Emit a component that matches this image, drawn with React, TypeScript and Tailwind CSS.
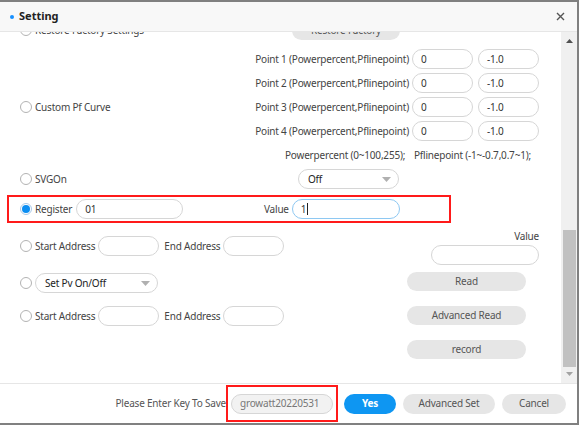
import React from "react";

function Radio({ checked }: { checked?: boolean }) {
  return (
    <span
      className={
        "flex h-[12px] w-[12px] shrink-0 items-center justify-center rounded-full border bg-white " +
        (checked ? "border-[#a9c9e8]" : "border-[#b3b3b3]")
      }
    >
      {checked && <span className="h-[8px] w-[8px] rounded-full bg-[#0b8ef2]" />}
    </span>
  );
}

function Field({
  w,
  value,
  focused,
}: {
  w: string;
  value?: string;
  focused?: boolean;
}) {
  return (
    <div
      className={
        "flex h-[20px] shrink-0 items-center rounded-full border bg-white pl-[8px] text-[#333] " +
        w +
        (focused ? " border-[#8ec8f2]" : " border-[#d6d6d6]")
      }
    >
      {value}
      {focused && <span className="ml-[1px] h-[12px] w-px bg-[#222]" />}
    </div>
  );
}

function Caret() {
  return (
    <svg width="9" height="5" viewBox="0 0 9 5" className="shrink-0">
      <path d="M0 0 L9 0 L4.5 5 Z" fill="#b0b0b0" />
    </svg>
  );
}

function Select({ w, value }: { w: string; value: string }) {
  return (
    <div
      className={
        "flex h-[20px] shrink-0 items-center justify-between rounded-full border border-[#d6d6d6] bg-white pl-[9px] pr-[7px] text-[#222] " +
        w
      }
    >
      <span>{value}</span>
      <Caret />
    </div>
  );
}

function GrayButton({ label, w, h = "h-[19px]" }: { label: string; w: string; h?: string }) {
  return (
    <div
      className={
        "flex shrink-0 items-center justify-center rounded-full bg-[#e6e6e6] text-[#555] " +
        w +
        " " +
        h
      }
    >
      {label}
    </div>
  );
}

const POINTS = ["Point 1", "Point 2", "Point 3", "Point 4"];

function AddressRow() {
  return (
    <div className="flex h-[24px] items-center">
      <Radio />
      <span className="ml-[3px]">Start Address</span>
      <div className="ml-[3px]">
        <Field w="w-[61px]" />
      </div>
      <span className="ml-[5px]">End Address</span>
      <div className="ml-[3px]">
        <Field w="w-[61px]" />
      </div>
    </div>
  );
}

export default function App() {
  return (
    <div
      className="flex h-[425px] w-[579px] flex-col overflow-hidden border-y-2 border-r-2 border-[#808080] bg-white text-[10px] tracking-[-0.2px] text-[#444]"
      style={{ fontFamily: '"Noto Sans", "Open Sans", sans-serif' }}
    >
      {/* title bar */}
      <div className="flex h-[30px] shrink-0 items-center border-b border-[#e6e6e6] bg-[#f8f8f8] pl-[10px] pr-[12px]">
        <span className="h-[4px] w-[4px] rounded-full bg-[#1890ff]" />
        <span className="ml-[5px] text-[11px] font-bold tracking-normal text-[#222]">Setting</span>
        <svg width="9" height="9" viewBox="0 0 9 9" className="ml-auto">
          <path d="M1 1 L8 8 M8 1 L1 8" stroke="#555" strokeWidth="1.4" />
        </svg>
      </div>

      {/* body */}
      <div className="flex h-[351px] shrink-0">
        <div className="flex-1 overflow-hidden">
          <div className="-mt-[12px]">
            <div className="flex h-[20px] items-center pl-[20px]">
              <div className="flex w-[272px] items-center">
                <Radio />
                <span className="ml-[3px]">Restore Factory Settings</span>
              </div>
              <GrayButton label="Restore Factory" w="w-[108px]" />
            </div>

            <div className="mt-[7px]">
              {POINTS.map((p, i) => (
                <div key={p} className="flex h-[24px] items-center pl-[20px] pr-[22px]">
                  <div className="flex flex-1 items-center">
                    {i === 2 && (
                      <>
                        <Radio />
                        <span className="ml-[3px]">Custom Pf Curve</span>
                      </>
                    )}
                  </div>
                  <span>{p} (Powerpercent,Pflinepoint)</span>
                  <div className="ml-[3px]">
                    <Field w="w-[61px]" value="0" />
                  </div>
                  <div className="ml-[5px]">
                    <Field w="w-[61px]" value="-1.0" />
                  </div>
                </div>
              ))}
            </div>

            <div className="flex h-[24px] items-center pl-[285px]">
              <span className="w-[129px]">Powerpercent (0~100,255);</span>
              <span>Pflinepoint (-1~-0.7,0.7~1);</span>
            </div>

            <div className="flex h-[24px] items-center pl-[20px]">
              <div className="flex w-[278px] items-center">
                <Radio />
                <span className="ml-[3px]">SVGOn</span>
              </div>
              <Select w="w-[101px]" value="Off" />
            </div>

            <div className="ml-[7px] mt-[4px] flex h-[28px] w-[444px] items-center border-2 border-[#ff1a1a] pl-[11px]">
              <div className="flex w-[244px] items-center">
                <Radio checked />
                <span className="ml-[3px]">Register</span>
                <div className="ml-[4px]">
                  <Field w="w-[107px]" value="01" />
                </div>
              </div>
              <span>Value</span>
              <div className="ml-[3px]">
                <Field w="w-[108px]" value="1" focused />
              </div>
            </div>

            <div className="mt-[5px] flex pr-[22px]">
              <div className="flex-1 pl-[20px] pt-[6px]">
                <AddressRow />
                <div className="mt-[13px] flex h-[24px] items-center">
                  <Radio />
                  <div className="ml-[3px]">
                    <Select w="w-[123px]" value="Set Pv On/Off" />
                  </div>
                </div>
                <div className="mt-[9px]">
                  <AddressRow />
                </div>
              </div>
              <div className="flex w-[132px] flex-col">
                <div className="flex h-[16px] items-center justify-end">Value</div>
                <div className="mt-[1px] self-end">
                  <Field w="w-[108px]" />
                </div>
                <div className="mt-[7px] flex flex-col gap-[15px]">
                  <GrayButton label="Read" w="w-[119px]" />
                  <GrayButton label="Advanced Read" w="w-[119px]" />
                  <GrayButton label="record" w="w-[119px]" />
                </div>
              </div>
            </div>
          </div>
        </div>

        {/* scrollbar */}
        <div className="flex w-[16px] shrink-0 flex-col items-center bg-[#f0f0f0]">
          <svg width="7" height="4" viewBox="0 0 7 4" className="mt-[7px]">
            <path d="M0 4 L7 4 L3.5 0 Z" fill="#505050" />
          </svg>
          <div className="mt-[187px] h-[137px] w-[13px] bg-[#c1c1c1]" />
          <svg width="7" height="4" viewBox="0 0 7 4" className="mt-[5px]">
            <path d="M0 0 L7 0 L3.5 4 Z" fill="#a3a3a3" />
          </svg>
        </div>
      </div>

      {/* footer */}
      <div className="flex flex-1 items-center justify-end border-t border-[#e6e6e6] pr-[11px]">
        <span className="text-[#555]">Please Enter Key To Save</span>
        <div className="flex h-[37px] items-center border-2 border-[#ff1a1a] px-[3px]">
          <div className="flex h-[20px] w-[102px] items-center rounded-full border border-[#d6d6d6] bg-[#f2f2f2] pl-[8px] text-[#777]">
            growatt20220531
          </div>
        </div>
        <div className="ml-[6px] flex h-[20px] w-[52px] items-center justify-center rounded-full bg-[#0e96f2] font-bold text-white">
          Yes
        </div>
        <div className="ml-[7px]">
          <GrayButton label="Advanced Set" w="w-[92px]" h="h-[20px]" />
        </div>
        <div className="ml-[7px]">
          <GrayButton label="Cancel" w="w-[64px]" h="h-[20px]" />
        </div>
      </div>
    </div>
  );
}
